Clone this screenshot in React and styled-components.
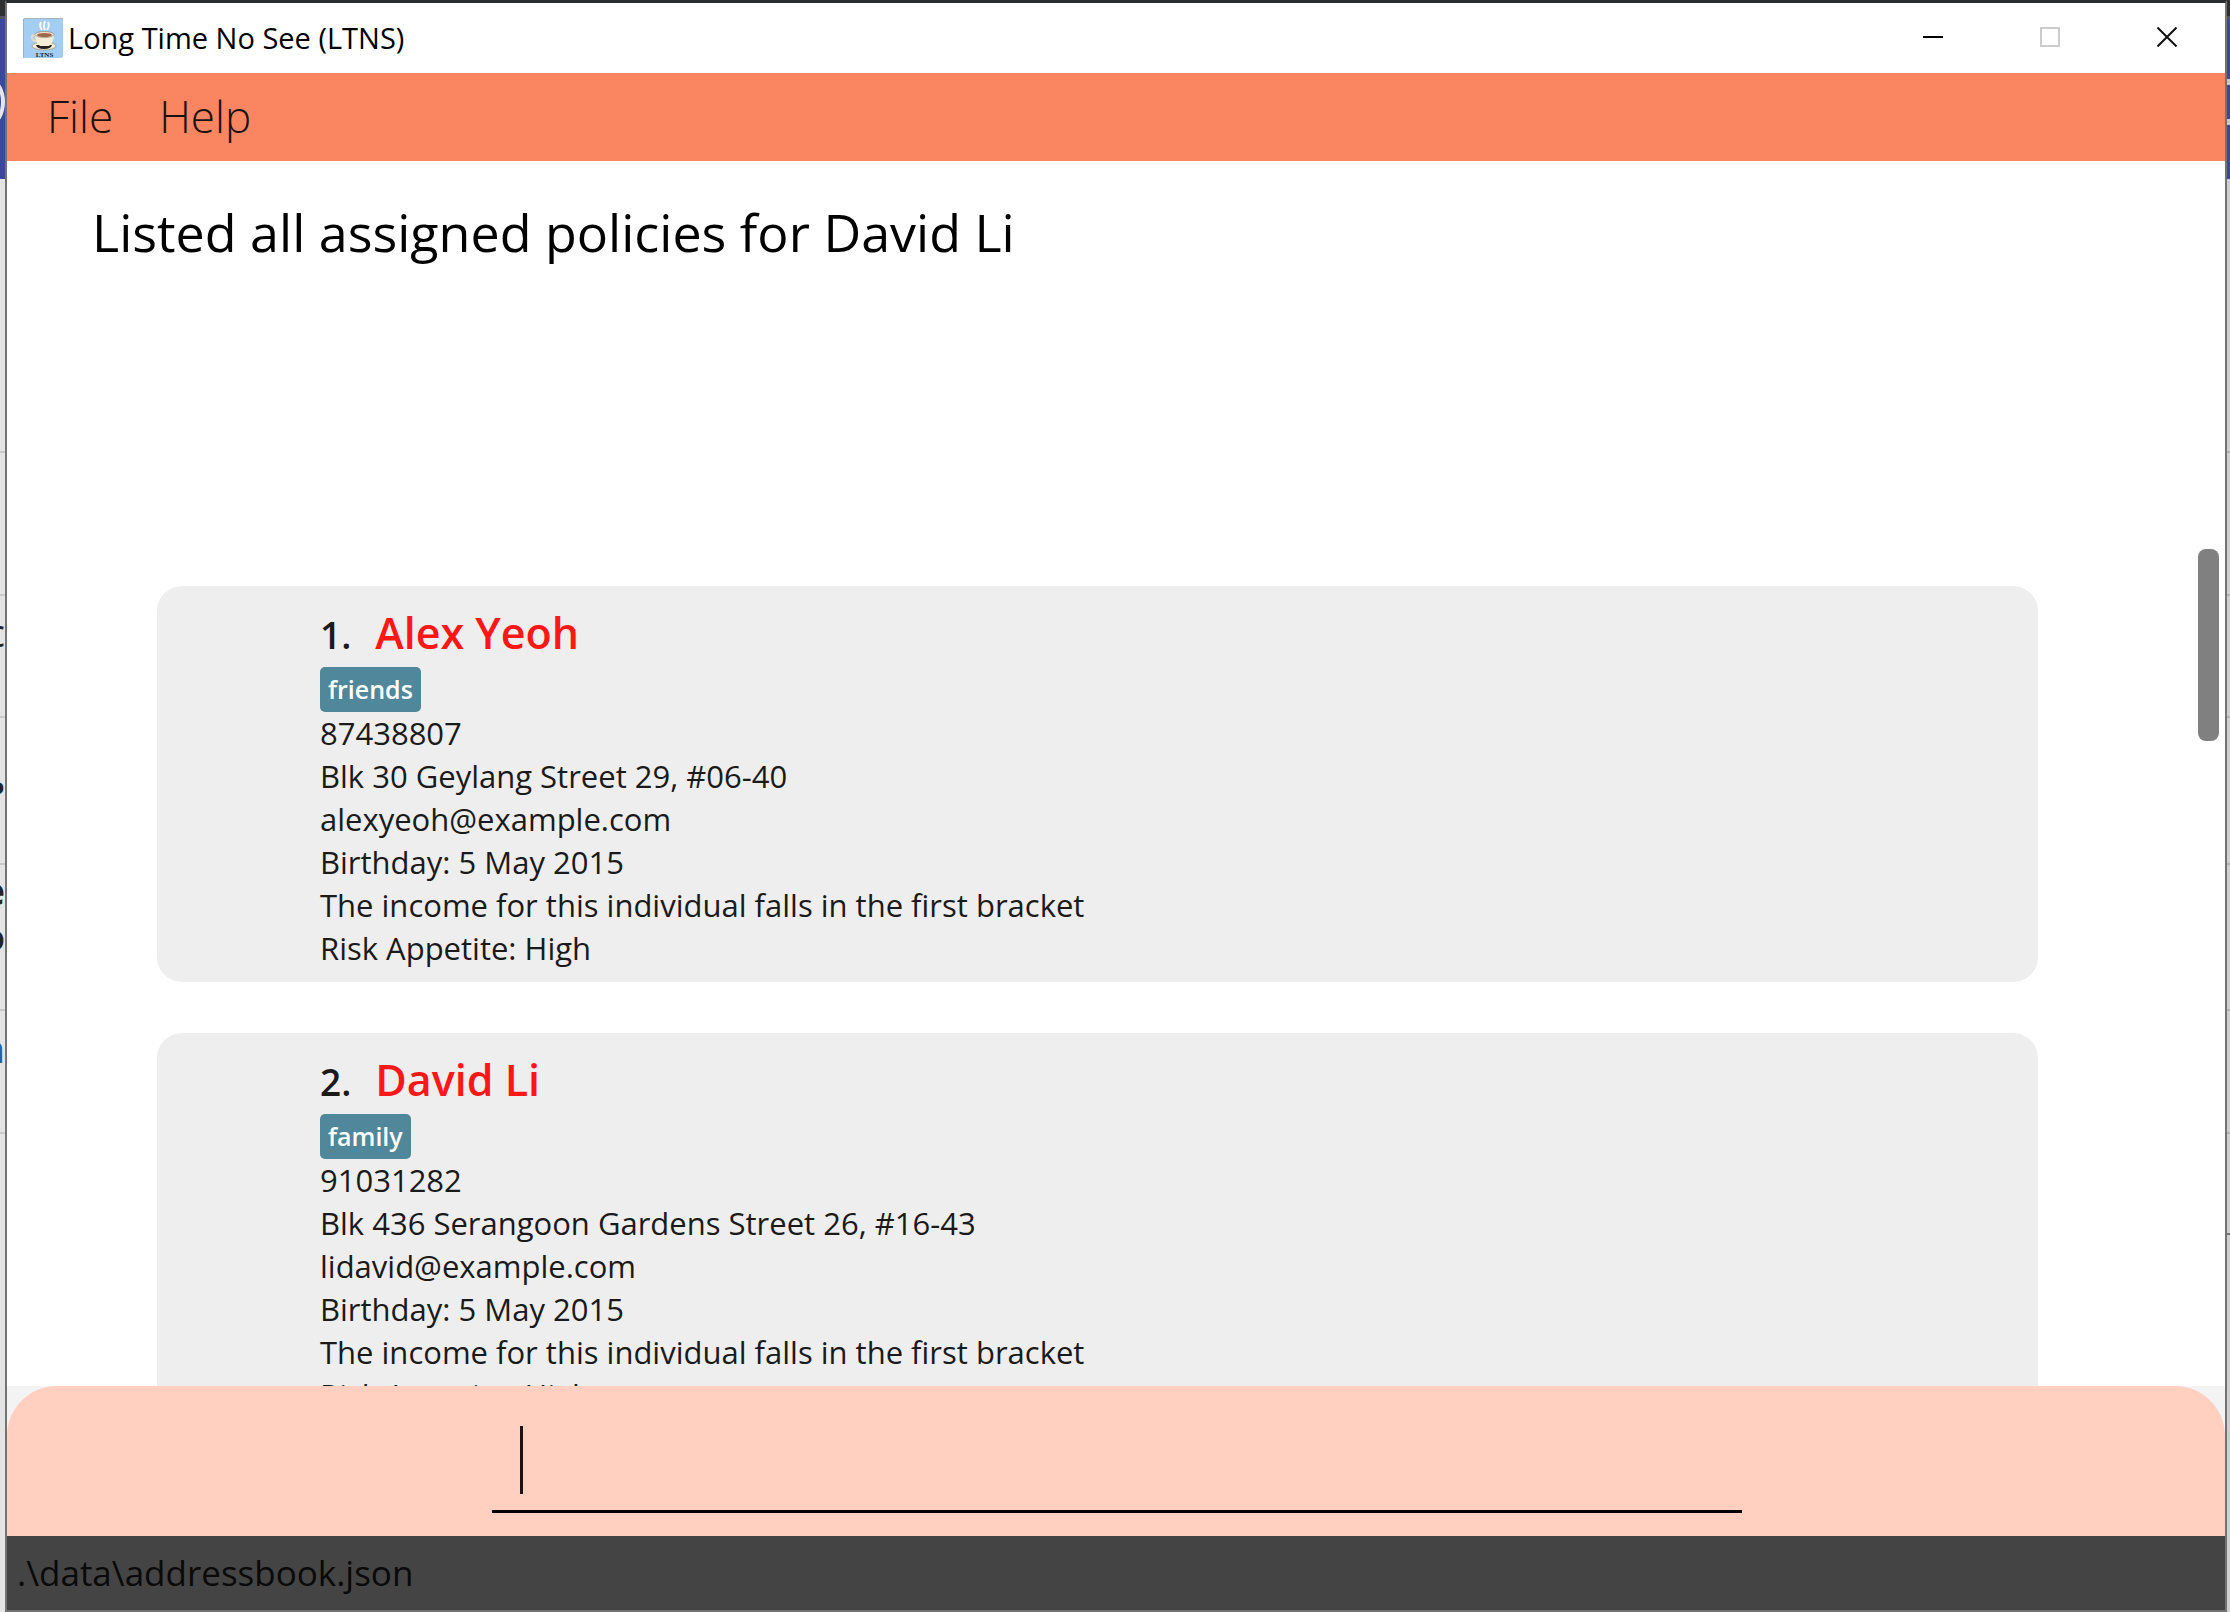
import React from "react";
import styled, { createGlobalStyle } from "styled-components";

const GlobalStyle = createGlobalStyle`
  * { box-sizing: border-box; }
  html, body { margin: 0; height: 100%; }
  #root { height: 100%; }
  body {
    overflow: hidden;
    font-family: "Open Sans", "Noto Sans", "Liberation Sans", sans-serif;
    color: #1a1a1a;
  }
  svg { display: block; }
  p, h1, h2, ul, ol { margin: 0; padding: 0; font-weight: 400; }
`;

const Desktop = styled.div`
  display: grid;
  grid-template-columns: 5px minmax(0, 1fr) 3px;
  height: 100vh;
  background: #2b2c30;
`;

const Backdrop = styled.div`
  display: flex;
  flex-direction: column;
  overflow: hidden;
  background: ${(p) => p.$shade};
`;
const BackdropTop = styled.div`
  flex: 0 0 19px;
  background: #2f3034;
  border-bottom: 3px solid #55565a;
`;
const BackdropNav = styled.div`
  flex: 0 0 160px;
  display: flex;
  flex-direction: column;
  gap: 34px;
  padding-top: 60px;
  background: #3c489c;
`;
const NavRing = styled.span`
  width: 28px;
  height: 46px;
  margin-left: -23px;
  border: 4px solid #e6e6ea;
  border-radius: 50%;
`;
const NavBar = styled.span`
  height: 6px;
  background: #c8c8c8;
`;
const BackdropRow = styled.div`
  display: flex;
  flex-direction: column;
  align-items: flex-end;
  justify-content: center;
  flex: 0 0 ${(p) => p.$h}px;
  padding-bottom: ${(p) => (p.$raised ? 48 : 8)}px;
  border-bottom: 2px solid ${(p) => p.$line};
  font-size: 38px;
  line-height: 46px;
  font-weight: ${(p) => (p.$bold ? 700 : 400)};
  color: ${(p) => (p.$link ? "#1f62ae" : "#212529")};
`;

const Window = styled.div`
  display: flex;
  flex-direction: column;
  min-width: 0;
  min-height: 0;
  background: #ffffff;
  border: 2px solid #737373;
  border-top: 3px solid #2b2c30;
`;

const TitleBar = styled.header`
  display: flex;
  align-items: center;
  flex: 0 0 70px;
  padding-left: 16px;
  background: #ffffff;
  color: #000000;
`;
const WindowTitle = styled.h1`
  flex: 1;
  padding-left: 5px;
  font-size: 29px;
  line-height: 40px;
`;
const WindowButton = styled.button`
  display: grid;
  place-items: center;
  align-self: flex-start;
  width: 117px;
  height: 68px;
  padding: 0;
  border: 0;
  background: transparent;
`;

const MenuBar = styled.nav`
  display: flex;
  align-items: center;
  flex: 0 0 88px;
  padding: 0 17px 2px;
  background: #f98561;
`;
const MenuButton = styled.button`
  padding: 0 23px;
  border: 0;
  background: transparent;
  color: #1a1210;
  font: inherit;
  font-weight: 300;
  font-size: 44px;
  line-height: 64px;
`;

const Result = styled.p`
  flex: 0 0 383px;
  padding: 33px 85px;
  color: #000000;
  font-size: 52px;
  line-height: 76px;
`;

const ListArea = styled.main`
  position: relative;
  flex: 1 1 0;
  min-height: 0;
  display: flex;
`;
const PersonList = styled.ol`
  flex: 1;
  display: flex;
  flex-direction: column;
  gap: 51px;
  overflow: hidden;
  padding: 42px 187px 0 150px;
  list-style: none;
`;
const ScrollThumb = styled.div`
  position: absolute;
  top: 5px;
  right: 6px;
  width: 21px;
  height: 192px;
  border-radius: 8px;
  background: #808080;
`;

const Card = styled.li`
  flex: none;
  padding: 18px 20px 12px 163px;
  border-radius: 25px;
  background: #eeeeee;
`;
const CardHead = styled.div`
  display: flex;
  align-items: baseline;
  gap: 24px;
  height: 63px;
  line-height: 58px;
  font-weight: 600;
`;
const Index = styled.span`
  font-size: 37px;
`;
const Name = styled.h2`
  font-size: 43px;
  font-weight: 600;
  color: #ff1717;
`;
const Tags = styled.div`
  display: flex;
  gap: 8px;
`;
const Tag = styled.span`
  padding: 0 8px;
  border-radius: 5px;
  background: #50879a;
  color: #ffffff;
  font-size: 25px;
  line-height: 45px;
  font-weight: 600;
`;
const Line = styled.p`
  font-size: 31px;
  line-height: 43px;
`;

const CommandArea = styled.form`
  flex: 0 0 150px;
  background: #f3f3f3;
`;
const CommandPanel = styled.div`
  display: flex;
  align-items: flex-start;
  justify-content: center;
  height: 100%;
  padding: 24px 0 0 2px;
  border-radius: 50px 50px 0 0;
  background: #ffcfbf;
`;
const CommandField = styled.label`
  display: flex;
  align-items: center;
  width: 1250px;
  max-width: 80%;
  height: 103px;
  padding: 0 28px;
  border-bottom: 3px solid #000000;
`;
const Caret = styled.span`
  flex: none;
  width: 3px;
  height: 68px;
  background: #1a1412;
`;
const CommandInput = styled.input`
  flex: 1;
  min-width: 0;
  border: 0;
  outline: 0;
  background: transparent;
  font: inherit;
  font-size: 44px;
`;

const StatusBar = styled.footer`
  flex: 0 0 73px;
  padding: 4px 10px;
  background: #444444;
  color: #0a0a0a;
  font-size: 35px;
  line-height: 66px;
`;

const people = [
  {
    name: "Alex Yeoh",
    tags: ["friends"],
    lines: [
      "87438807",
      "Blk 30 Geylang Street 29, #06-40",
      "alexyeoh@example.com",
      "Birthday: 5 May 2015",
      "The income for this individual falls in the first bracket",
      "Risk Appetite: High",
    ],
  },
  {
    name: "David Li",
    tags: ["family"],
    lines: [
      "91031282",
      "Blk 436 Serangoon Gardens Street 26, #16-43",
      "lidavid@example.com",
      "Birthday: 5 May 2015",
      "The income for this individual falls in the first bracket",
      "Risk Appetite: High",
    ],
  },
];

function CupIcon() {
  return (
    <svg width="40" height="40" viewBox="0 0 40 40" aria-hidden="true">
      <rect width="40" height="40" rx="2" fill="#a3cdf3" />
      <path d="M.5 40V2Q.5.5 2 .5H40" fill="none" stroke="#a9b2ba" />
      <path d="M19 12q-3-4-1-8M22 12q-2-4 0-9M24 12q3-4 1-8" fill="none" stroke="#f6f7f5" strokeWidth="2" />
      <ellipse cx="21" cy="28" rx="12" ry="4" fill="#f1ead2" stroke="#8a816c" strokeWidth=".6" />
      <path d="M13 27q1 4 8 4t8-4z" fill="#22201d" />
      <path d="M13 18q-5-2-4 2t7 3" fill="none" stroke="#e6dcbf" strokeWidth="2" />
      <path d="M12 16q0 8 5 12h9q5-4 5-12z" fill="#f4ecd4" />
      <ellipse cx="21.5" cy="16.5" rx="9.5" ry="3" fill="#efe6cc" stroke="#857a66" strokeWidth=".6" />
      <ellipse cx="21.5" cy="17" rx="7.5" ry="2" fill="#a0694c" />
      <text x="21.5" y="38.5" textAnchor="middle" fontFamily="Liberation Serif, serif" fontWeight="700" fontSize="7" fill="#1c2530">LTNS</text>
    </svg>
  );
}

function PersonCard({ person, index }) {
  return (
    <Card>
      <CardHead>
        <Index>{index}.</Index>
        <Name>{person.name}</Name>
      </CardHead>
      <Tags>
        {person.tags.map((t) => (
          <Tag key={t}>{t}</Tag>
        ))}
      </Tags>
      {person.lines.map((l) => (
        <Line key={l}>{l}</Line>
      ))}
    </Card>
  );
}

export default function App() {
  return (
    <>
      <GlobalStyle />
      <Desktop>
        <Backdrop $shade="#e4e4e4" aria-hidden="true">
          <BackdropTop />
          <BackdropNav>
            <NavRing />
          </BackdropNav>
          <BackdropRow $h={274} $line="#c9c9c9" />
          <BackdropRow $h={143} $line="#c9c9c9" />
          <BackdropRow $h={122} $line="#c9c9c9" $raised>c</BackdropRow>
          <BackdropRow $h={147} $line="#c9c9c9" $bold>•</BackdropRow>
          <BackdropRow $h={146} $line="#c9c9c9" $bold $raised>
            <span>e</span>
            <span>o</span>
          </BackdropRow>
          <BackdropRow $h={123} $line="#c9c9c9" $link $raised>n</BackdropRow>
        </Backdrop>
        <Window>
          <TitleBar>
            <CupIcon />
            <WindowTitle>Long Time No See (LTNS)</WindowTitle>
            <WindowButton type="button" aria-label="Minimize">
              <svg width="20" height="20"><path d="M0 10h20" stroke="#000" strokeWidth="2" /></svg>
            </WindowButton>
            <WindowButton type="button" aria-label="Maximize" disabled>
              <svg width="20" height="20"><path d="M1 1h18v18H1z" fill="none" stroke="#ccc" strokeWidth="2" /></svg>
            </WindowButton>
            <WindowButton type="button" aria-label="Close">
              <svg width="20" height="20"><path d="M.5.5l19 19M19.5.5l-19 19" stroke="#111" strokeWidth="2" /></svg>
            </WindowButton>
          </TitleBar>
          <MenuBar>
            <MenuButton type="button">File</MenuButton>
            <MenuButton type="button">Help</MenuButton>
          </MenuBar>
          <Result>Listed all assigned policies for David Li</Result>
          <ListArea>
            <PersonList>
              {people.map((p, i) => (
                <PersonCard key={p.name} person={p} index={i + 1} />
              ))}
            </PersonList>
            <ScrollThumb />
          </ListArea>
          <CommandArea onSubmit={(e) => e.preventDefault()}>
            <CommandPanel>
              <CommandField>
                <Caret />
                <CommandInput type="text" aria-label="Command" />
              </CommandField>
            </CommandPanel>
          </CommandArea>
          <StatusBar>.\data\addressbook.json</StatusBar>
        </Window>
        <Backdrop $shade="#cfcfcf" aria-hidden="true">
          <BackdropTop />
          <BackdropNav>
            <NavBar />
            <NavBar />
          </BackdropNav>
          <BackdropRow $h={274} $line="#b3b3b3" />
          <BackdropRow $h={143} $line="#b3b3b3" />
          <BackdropRow $h={122} $line="#b3b3b3" />
          <BackdropRow $h={147} $line="#b3b3b3" />
          <BackdropRow $h={146} $line="#b3b3b3" />
          <BackdropRow $h={123} $line="#b3b3b3" />
          <BackdropRow $h={101} $line="#777777" />
        </Backdrop>
      </Desktop>
    </>
  );
}
